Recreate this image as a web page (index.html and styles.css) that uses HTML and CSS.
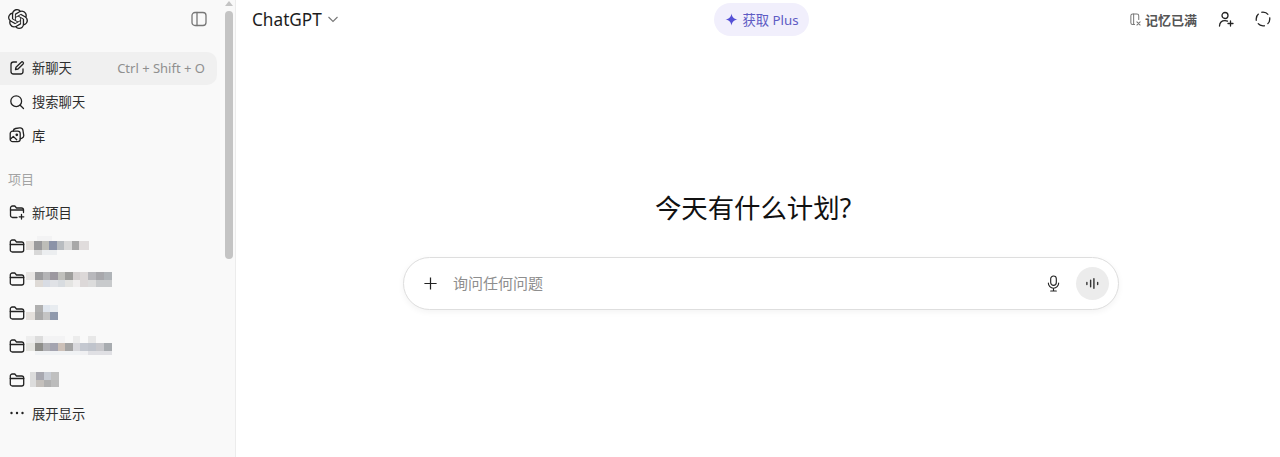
FILE: index.html
```html
<!DOCTYPE html>
<html>
<head>
    <title>ChatGPT</title>
    <link rel="stylesheet" href="styles.css">
</head>
<body>
    <div class="app">
        <aside class="sidebar">
            <div class="side-inner">
                <div class="side-top">
                    <svg class="logo" viewBox="0 0 24 24" fill="#222"><path d="M22.2819 9.8211a5.9847 5.9847 0 0 0-.5157-4.9108 6.0462 6.0462 0 0 0-6.5098-2.9A6.0651 6.0651 0 0 0 4.9807 4.1818a5.9847 5.9847 0 0 0-3.9977 2.9 6.0462 6.0462 0 0 0 .7427 7.0966 5.98 5.98 0 0 0 .511 4.9107 6.051 6.051 0 0 0 6.5146 2.9001A5.9847 5.9847 0 0 0 13.2599 24a6.0557 6.0557 0 0 0 5.7718-4.2058 5.9894 5.9894 0 0 0 3.9977-2.9001 6.0557 6.0557 0 0 0-.7475-7.0729zm-9.022 12.6081a4.4755 4.4755 0 0 1-2.8764-1.0408l.1419-.0804 4.7783-2.7582a.7948.7948 0 0 0 .3927-.6813v-6.7369l2.02 1.1686a.071.071 0 0 1 .038.052v5.5826a4.504 4.504 0 0 1-4.4945 4.4944zm-9.6607-4.1254a4.4708 4.4708 0 0 1-.5346-3.0137l.142.0852 4.783 2.7582a.7712.7712 0 0 0 .7806 0l5.8428-3.3685v2.3324a.0804.0804 0 0 1-.0332.0615L9.74 19.9502a4.4992 4.4992 0 0 1-6.1408-1.6464zM2.3408 7.8956a4.485 4.485 0 0 1 2.3655-1.9728V11.6a.7664.7664 0 0 0 .3879.6765l5.8144 3.3543-2.0201 1.1685a.0757.0757 0 0 1-.071 0l-4.8303-2.7865A4.504 4.504 0 0 1 2.3408 7.872zm16.5963 3.8558L13.1038 8.364 15.1192 7.2a.0757.0757 0 0 1 .071 0l4.8303 2.7913a4.4944 4.4944 0 0 1-.6765 8.1042v-5.6772a.79.79 0 0 0-.407-.667zm2.0107-3.0231l-.142-.0852-4.7735-2.7818a.7759.7759 0 0 0-.7854 0L9.409 9.2297V6.8974a.0662.0662 0 0 1 .0284-.0615l4.8303-2.7866a4.4992 4.4992 0 0 1 6.6802 4.66zM8.3065 12.863l-2.02-1.1638a.0804.0804 0 0 1-.038-.0567V6.0742a4.4992 4.4992 0 0 1 7.3757-3.4537l-.142.0805L8.704 5.459a.7948.7948 0 0 0-.3927.6813zm1.0976-2.3654l2.602-1.4998 2.6069 1.4998v2.9994l-2.5974 1.4997-2.6067-1.4997Z"/></svg>
                    <svg class="icon toggle" viewBox="0 0 16 16"><rect x="1" y="1.5" width="14" height="13" rx="3"/><path d="M6 1.5v13"/></svg>
                </div>

                <div class="row active">
                    <svg class="icon" viewBox="0 0 16 16"><path d="M7.5 2H4.5A2.5 2.5 0 0 0 2 4.5v7A2.5 2.5 0 0 0 4.5 14h7a2.5 2.5 0 0 0 2.5-2.5V9"/><path d="M6.5 9.5 7 7.2l5.2-5a1.3 1.3 0 0 1 1.9 1.8L9 9z"/></svg>
                    <span class="label">新聊天</span>
                    <span class="shortcut">Ctrl + Shift + O</span>
                </div>
                <div class="row">
                    <svg class="icon" viewBox="0 0 16 16"><circle cx="7.2" cy="7.2" r="5.4"/><path d="m11.2 11.2 3.3 3.3"/></svg>
                    <span class="label">搜索聊天</span>
                </div>
                <div class="row">
                    <svg class="icon" viewBox="0 0 16 16"><rect x="1.2" y="4.2" width="10" height="10.4" rx="2.4"/><path d="M4.2 4.2c.1-1.400 1-2.400 2.400-2.700l4-.6c1.600-.2 3 .8 3.300 2.300l.8 5c.2 1.300-.5 2.500-1.700 3l-1.800.6"/><path d="m1.600 12 2.700-2.600 3.400 3.300"/><circle cx="7.800" cy="7.800" r=".7"/></svg>
                    <span class="label">库</span>
                </div>

                <div class="section">项目</div>

                <div class="row">
                    <svg class="icon" viewBox="0 0 16 16"><path d="M8 13.500H3.500a2 2 0 0 1-2-2V4a2 2 0 0 1 2-2h2.300l1.700 2h5a2 2 0 0 1 2 2v2.500"/><path d="M1.500 6h13"/><path d="M12.500 10.500v4.500M10.200 12.800h4.600"/></svg>
                    <span class="label">新项目</span>
                </div>
                <div class="row">
                    <svg class="icon" viewBox="0 0 16 16"><path d="M1.300 4a2 2 0 0 1 2-2h2.500l1.700 2h5.200a2 2 0 0 1 2 2v6a2 2 0 0 1-2 2H3.300a2 2 0 0 1-2-2z"/><path d="M1.300 6.500h13.400"/></svg>
                    <svg class="mosaic" viewBox="0 0 64 20" width="64" height="20" shape-rendering="crispEdges">
                        <rect x="11" y="0" width="15" height="5" fill="#f3f3f4"/>
                        <rect x="0" y="5" width="8" height="9" fill="#e0dcd8"/><rect x="8" y="5" width="8" height="9" fill="#9a9a9c"/><rect x="16" y="5" width="7" height="9" fill="#bdbdb8"/><rect x="23" y="5" width="8" height="9" fill="#8b93a8"/><rect x="31" y="5" width="7" height="9" fill="#b8bcc0"/><rect x="38" y="5" width="8" height="9" fill="#d8d8d8"/><rect x="46" y="5" width="7" height="9" fill="#a8a8a8"/><rect x="53" y="5" width="10" height="9" fill="#e0dcdc"/>
                        <rect x="8" y="14" width="8" height="5" fill="#d8d8d8"/><rect x="16" y="14" width="15" height="5" fill="#eceef0"/>
                    </svg>
                </div>
                <div class="row">
                    <svg class="icon" viewBox="0 0 16 16"><path d="M1.300 4a2 2 0 0 1 2-2h2.500l1.700 2h5.200a2 2 0 0 1 2 2v6a2 2 0 0 1-2 2H3.300a2 2 0 0 1-2-2z"/><path d="M1.300 6.500h13.400"/></svg>
                    <svg class="mosaic" viewBox="0 0 86 20" width="86" height="20" shape-rendering="crispEdges">
                        <rect x="0" y="3" width="9" height="8" fill="#e8e6e4"/><rect x="9" y="3" width="8" height="8" fill="#9c9c9e"/><rect x="17" y="3" width="7" height="8" fill="#b4b4b6"/><rect x="24" y="3" width="8" height="8" fill="#9c98a0"/><rect x="32" y="3" width="7" height="8" fill="#c0c0bc"/><rect x="39" y="3" width="8" height="8" fill="#9e9e9c"/><rect x="47" y="3" width="7" height="8" fill="#d4d0d0"/><rect x="54" y="3" width="8" height="8" fill="#dcd8d8"/><rect x="62" y="3" width="8" height="8" fill="#b8b8bc"/><rect x="70" y="3" width="8" height="8" fill="#a8a8ac"/><rect x="78" y="3" width="8" height="8" fill="#b0b4b8"/>
                        <rect x="9" y="11" width="8" height="7" fill="#dedad6"/><rect x="17" y="11" width="7" height="7" fill="#d8dce4"/><rect x="24" y="11" width="8" height="7" fill="#e0e2e6"/><rect x="32" y="11" width="7" height="7" fill="#d8dce0"/><rect x="39" y="11" width="8" height="7" fill="#e4e4e2"/><rect x="47" y="11" width="7" height="7" fill="#f0eeee"/><rect x="54" y="11" width="8" height="7" fill="#dcd8d8"/><rect x="62" y="11" width="8" height="7" fill="#dcdcdc"/><rect x="70" y="11" width="16" height="7" fill="#c8cacc"/>
                    </svg>
                </div>
                <div class="row">
                    <svg class="icon" viewBox="0 0 16 16"><path d="M1.300 4a2 2 0 0 1 2-2h2.500l1.700 2h5.200a2 2 0 0 1 2 2v6a2 2 0 0 1-2 2H3.300a2 2 0 0 1-2-2z"/><path d="M1.300 6.500h13.400"/></svg>
                    <svg class="mosaic" viewBox="0 0 40 20" width="40" height="20" shape-rendering="crispEdges">
                        <rect x="9" y="2" width="8" height="7" fill="#b0b0b0"/><rect x="17" y="2" width="7" height="7" fill="#e0e6ee"/><rect x="24" y="2" width="8" height="7" fill="#e8ecf0"/>
                        <rect x="0" y="9" width="9" height="8" fill="#e4e0dc"/><rect x="9" y="9" width="8" height="8" fill="#aaaaaa"/><rect x="17" y="9" width="7" height="8" fill="#c4c4c4"/><rect x="24" y="9" width="8" height="8" fill="#8f99ac"/>
                    </svg>
                </div>
                <div class="row">
                    <svg class="icon" viewBox="0 0 16 16"><path d="M1.300 4a2 2 0 0 1 2-2h2.500l1.700 2h5.200a2 2 0 0 1 2 2v6a2 2 0 0 1-2 2H3.300a2 2 0 0 1-2-2z"/><path d="M1.300 6.500h13.400"/></svg>
                    <svg class="mosaic" viewBox="0 0 86 20" width="86" height="20" shape-rendering="crispEdges">
                        <rect x="0" y="0" width="9" height="7" fill="#eeeeee"/><rect x="9" y="0" width="8" height="7" fill="#dcdcdc"/><rect x="17" y="0" width="22" height="7" fill="#f3f3f4"/><rect x="47" y="0" width="7" height="7" fill="#ececec"/><rect x="62" y="0" width="8" height="7" fill="#e8e8e8"/>
                        <rect x="0" y="7" width="9" height="8" fill="#e4e4e0"/><rect x="9" y="7" width="8" height="8" fill="#8e8e8a"/><rect x="17" y="7" width="7" height="8" fill="#b0b0b4"/><rect x="24" y="7" width="8" height="8" fill="#a4a4b0"/><rect x="32" y="7" width="7" height="8" fill="#ccc0b8"/><rect x="39" y="7" width="8" height="8" fill="#a4a4a4"/><rect x="47" y="7" width="7" height="8" fill="#d8d8dc"/><rect x="54" y="7" width="8" height="8" fill="#c4c8d0"/><rect x="62" y="7" width="8" height="8" fill="#c0c4cc"/><rect x="70" y="7" width="8" height="8" fill="#c8c8cc"/><rect x="78" y="7" width="8" height="8" fill="#a8acb0"/>
                        <rect x="9" y="15" width="45" height="4" fill="#f0f2f4"/><rect x="54" y="15" width="8" height="4" fill="#f0f0f2"/><rect x="62" y="15" width="24" height="4" fill="#e0e0e4"/>
                    </svg>
                </div>
                <div class="row">
                    <svg class="icon" viewBox="0 0 16 16"><path d="M1.300 4a2 2 0 0 1 2-2h2.500l1.700 2h5.200a2 2 0 0 1 2 2v6a2 2 0 0 1-2 2H3.300a2 2 0 0 1-2-2z"/><path d="M1.300 6.500h13.400"/></svg>
                    <svg class="mosaic" viewBox="0 0 34 20" width="34" height="20" shape-rendering="crispEdges">
                        <rect x="4" y="2" width="6" height="8" fill="#dcdcdc"/><rect x="10" y="2" width="8" height="8" fill="#a8a8b0"/><rect x="18" y="2" width="7" height="8" fill="#c8ccd4"/><rect x="25" y="2" width="8" height="8" fill="#c0c0c0"/>
                        <rect x="4" y="10" width="6" height="7" fill="#dcdcdc"/><rect x="10" y="10" width="8" height="7" fill="#c4c0bc"/><rect x="18" y="10" width="7" height="7" fill="#b0b0b0"/><rect x="25" y="10" width="8" height="7" fill="#bcbcbc"/>
                    </svg>
                </div>
                <div class="row">
                    <svg class="icon" viewBox="0 0 16 16"><circle cx="2.500" cy="8" r="1.200" class="dot"/><circle cx="8" cy="8" r="1.200" class="dot"/><circle cx="13.500" cy="8" r="1.200" class="dot"/></svg>
                    <span class="label">展开显示</span>
                </div>
            </div>

            <div class="scrollbar">
                <div class="arrow"></div>
                <div class="thumb"></div>
            </div>
        </aside>

        <main class="main">
            <header class="topbar">
                <div class="model">
                    <span>ChatGPT</span>
                    <svg class="chevron" viewBox="0 0 12 12"><path d="m1.500 4 4.500 4.500L10.500 4"/></svg>
                </div>
                <div class="plus">
                    <svg class="spark" viewBox="0 0 14 14"><path d="M7 0.500c.6 3.600 2.300 5.700 6.500 6.500-4.200.8-5.900 2.900-6.500 6.500C6.400 9.900 4.700 7.800.5 7 4.700 6.200 6.400 4.100 7 .5z"/></svg>
                    <span>获取 Plus</span>
                </div>
                <div class="actions">
                    <div class="memory">
                        <svg class="icon small" viewBox="0 0 14 14"><path d="M6 12.500H4a2 2 0 0 1-2-2V3a2 2 0 0 1 2-2h4.500a2 2 0 0 1 2 2v4"/><path d="M5 1v11"/><path d="m8.500 9.500 3.500 3.500M12 9.500 8.500 13"/></svg>
                        <span>记忆已满</span>
                    </div>
                    <svg class="icon action" viewBox="0 0 16 16"><circle cx="7" cy="4.500" r="3"/><path d="M1.500 15c.2-3.400 2.400-5.300 5.500-5.300 1 0 1.800.2 2.500.5"/><path d="M12.500 10v5M10 12.500h5"/></svg>
                    <svg class="icon action" viewBox="0 0 16 16"><circle class="ring" cx="8" cy="8" r="6.800"/></svg>
                </div>
            </header>

            <section class="center">
                <h1>今天有什么计划?</h1>
                <div class="composer">
                    <svg class="add" viewBox="0 0 16 16"><path d="M8 1.500v13M1.500 8h13"/></svg>
                    <span class="placeholder">询问任何问题</span>
                    <svg class="mic" viewBox="0 0 16 18"><rect x="5" y="1" width="6" height="10" rx="3"/><path d="M2.500 8.500a5.500 5.500 0 0 0 11 0M8 14v3M5 17h6"/></svg>
                    <button class="voice">
                        <svg viewBox="0 0 16 16"><path d="M2 7v2M6 4.500v7M9.500 3v10M13.500 7v2"/></svg>
                    </button>
                </div>
            </section>
        </main>
    </div>
</body>
</html>
```

FILE: styles.css
```css
* { box-sizing: border-box; }
html, body { height: 100%; }
body { margin: 0; font-family: "Noto Sans", "Noto Sans CJK SC", sans-serif; color: #222; background: white; overflow: hidden; }

.app { display: flex; height: 457px; }

.sidebar { display: flex; width: 236px; flex-shrink: 0; background: #f9f9f9; border-right: 1px solid #ececec; }
.side-inner { width: 217px; flex-shrink: 0; }
.side-top { display: flex; justify-content: space-between; align-items: center; height: 38px; padding: 0 10px 0 8px; margin-bottom: 14px; }
.logo { width: 20px; height: 20px; }

.icon { width: 16px; height: 16px; flex-shrink: 0; fill: none; stroke: #222; stroke-width: 1.3; stroke-linecap: round; stroke-linejoin: round; }
.icon .dot { fill: #222; stroke: none; }
.toggle.icon { stroke: #777; }

.row { display: flex; align-items: center; height: 33.5px; padding-left: 9px; font-size: 13.3px; }
.row.active { background: #f0f0f0; border-radius: 0 10px 10px 0; height: 33px; padding: 0 12px 2px 9px; }
.label { margin-left: 7px; color: #2c2c2c; }
.shortcut { margin-left: auto; color: #8f8f8f; font-size: 13px; }
.section { height: 26px; margin-top: 14px; margin-bottom: 3.500px; padding: 0 0 1px 8px; display: flex; align-items: center; font-size: 13px; color: #a3a3a3; }

.mosaic { margin-left: 1px; filter: blur(0.7px); flex-shrink: 0; }

.scrollbar { width: 18px; padding: 0 0 0 8px; }
.arrow { width: 0; height: 0; margin-top: 1px; border-left: 4px solid transparent; border-right: 4px solid transparent; border-bottom: 5px solid #c4c4c4; }
.thumb { width: 8px; height: 248px; margin-top: 5px; background: #c4c4c4; border-radius: 4px; }

.main { flex: 1; display: flex; flex-direction: column; }
.topbar { display: grid; grid-template-columns: 1fr auto 1fr; align-items: center; height: 38px; padding: 0 9px 0 16px; }
.model { display: flex; align-items: center; gap: 5px; font-size: 17.200px; color: #1c1c1c; }
.chevron { width: 12px; height: 12px; fill: none; stroke: #777; stroke-width: 1.100; }

.plus { display: flex; align-items: center; gap: 4px; height: 33px; padding: 0 10px 0 11px; background: #f1effc; border-radius: 17px; color: #5e5bc4; font-size: 13.300px; }
.spark { width: 13px; height: 13px; fill: #5450d6; }

.actions { display: flex; justify-content: flex-end; align-items: center; gap: 21px; }
.memory { display: flex; align-items: center; gap: 3px; font-size: 13px; font-weight: 700; color: #555; }
.icon.small { width: 13px; height: 13px; stroke: #777; stroke-width: 1.100; }
.ring { stroke-dasharray: 7.700 3; stroke-dashoffset: 2; stroke-linecap: butt; }

.center { display: flex; flex-direction: column; align-items: center; padding: 150px 0 0 6px; }
h1 { margin: 0; padding-right: 16px; height: 40px; line-height: 40px; font-size: 26.400px; font-weight: 400; color: #111; }
.composer { display: flex; align-items: center; width: 716px; height: 53px; margin-top: 29px; padding: 0 9px 0 19px; background: white; border: 1px solid #dedede; border-radius: 27px; box-shadow: 0 2px 6px rgba(0,0,0,0.05); }
.add { width: 15px; height: 15px; fill: none; stroke: #222; stroke-width: 1.300; }
.placeholder { margin-left: 15px; padding-bottom: 3px; font-size: 15px; color: #8e8e8e; }
.mic { width: 15px; height: 17px; margin-left: auto; fill: none; stroke: #222; stroke-width: 1.200; stroke-linecap: round; }
.voice { display: flex; align-items: center; justify-content: center; width: 33px; height: 33px; margin-left: 15px; padding: 0; border: none; border-radius: 50%; background: #ececec; }
.voice svg { width: 15px; height: 15px; fill: none; stroke: #333; stroke-width: 1.500; stroke-linecap: round; }
```
